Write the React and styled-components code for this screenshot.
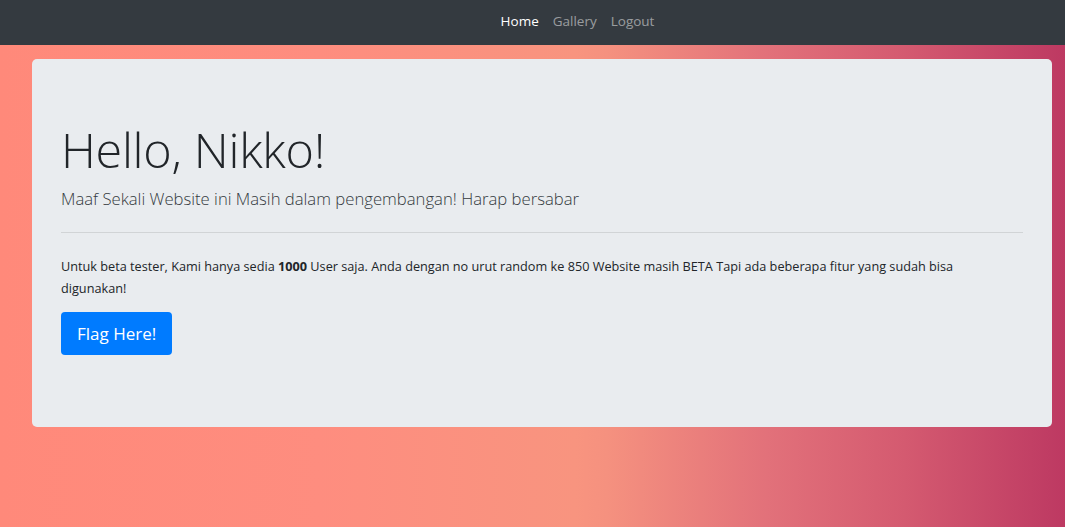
import styled, { createGlobalStyle } from "styled-components";

const GlobalStyle = createGlobalStyle`
  html, body {
    margin: 0;
    padding: 0;
  }
  body {
    font-family: "Open Sans", "Noto Sans", sans-serif;
    color: #212529;
    min-height: 527px;
    background: linear-gradient(
      to right,
      #ff897a 0%,
      #fe8d7f 30%,
      #f8947f 54%,
      #f5917f 57%,
      #e2717a 72%,
      #d45a70 85%,
      #bd3962 100%
    );
  }
`;

const Navbar = styled.nav`
  height: 45px;
  background: #343a40;
  display: flex;
  justify-content: center;
  align-items: center;
  gap: 14px;
  padding-left: 90px;
  padding-bottom: 3px;
  box-sizing: border-box;
`;

const NavItem = styled.a`
  font-size: 13.5px;
  text-decoration: none;
  color: ${({ $active }) => ($active ? "#fff" : "rgba(255,255,255,.5)")};
`;

const Jumbotron = styled.section`
  margin: 14px 13px 0 32px;
  background: #e9ecef;
  border-radius: 5px;
  padding: 58px 29px 72px 29px;
`;

const Title = styled.h1`
  margin: 0 0 4px;
  font-size: 48.5px;
  font-weight: 300;
  line-height: 64px;
  letter-spacing: -0.3px;
`;

const Lead = styled.p`
  margin: 0;
  font-size: 16.7px;
  font-weight: 300;
  line-height: 27px;
  color: #343a40;
`;

const Divider = styled.hr`
  margin: 20px 0 22px;
  border: 0;
  border-top: 1px solid rgba(0, 0, 0, 0.1);
`;

const Text = styled.p`
  max-width: 900px;
  margin: 0 0 13px;
  font-size: 12.7px;
  line-height: 22px;
`;

const Button = styled.button`
  display: block;
  font-family: inherit;
  font-size: 17px;
  color: #fff;
  background: #007bff;
  border: 0;
  border-radius: 4px;
  height: 43px;
  padding: 0 16px;
  cursor: pointer;
`;

export default function App() {
  return (
    <>
      <GlobalStyle />
      <Navbar>
        <NavItem $active href="#">Home</NavItem>
        <NavItem href="#">Gallery</NavItem>
        <NavItem href="#">Logout</NavItem>
      </Navbar>
      <Jumbotron>
        <Title>Hello, Nikko!</Title>
        <Lead>Maaf Sekali Website ini Masih dalam pengembangan! Harap bersabar</Lead>
        <Divider />
        <Text>
          Untuk beta tester, Kami hanya sedia <b>1000</b> User saja. Anda dengan no urut random ke 850
          Website masih BETA Tapi ada beberapa fitur yang sudah bisa digunakan!
        </Text>
        <Button>Flag Here!</Button>
      </Jumbotron>
    </>
  );
}
